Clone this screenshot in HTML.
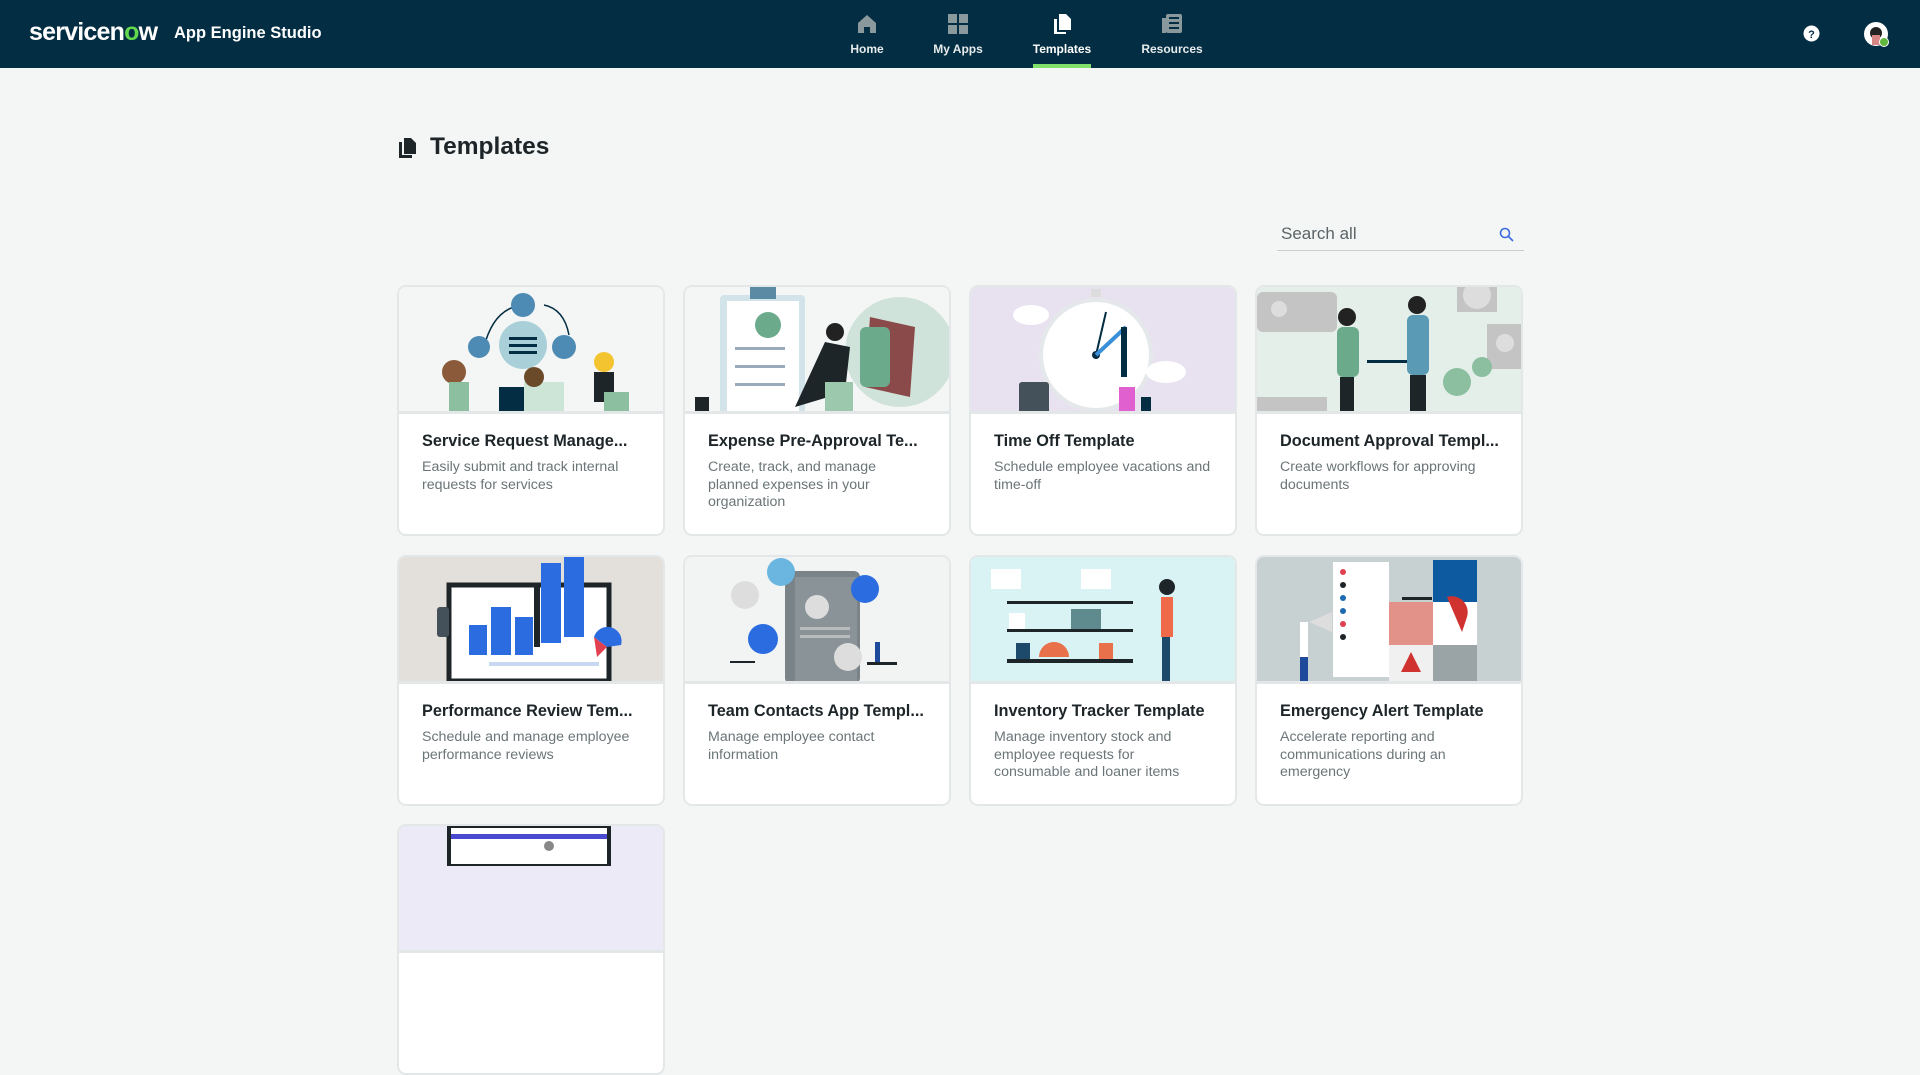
<!DOCTYPE html>
<html><head><meta charset="utf-8"><style>
*{box-sizing:border-box;margin:0;padding:0}
body{width:1920px;height:854px;overflow:hidden;background:#f4f6f6;font-family:"Liberation Sans",sans-serif;position:relative}
.hdr{position:absolute;left:0;top:0;width:1920px;height:68px;background:#032d42}
.logo{position:absolute;left:29px;top:18px;color:#fff;font-size:25px;font-weight:bold;letter-spacing:-0.8px}
.logo .o{color:#62d84e}
.app{position:absolute;left:174px;top:24px;color:#fff;font-size:16.5px;font-weight:bold}
.nav{position:absolute;top:0;height:68px;text-align:center;color:#e6ebec;font-size:12px;font-weight:bold}
.nav svg{display:block;margin:13px auto 7px}
.ul{position:absolute;left:1033px;top:64px;width:58px;height:4px;background:#7fe06a}
.title{position:absolute;left:430px;top:133px;font-size:24.5px;font-weight:bold;color:#1d2528}
.search{position:absolute;left:1277px;top:220px;width:247px;height:31px;border-bottom:1px solid #c7cdd0;font-size:17px;color:#5b6366;padding-left:4px;line-height:28px}
.card{position:absolute;width:268px;height:251px;background:#fff;border:2px solid #e4e7e8;border-radius:9px;overflow:hidden}
.img{height:127px;border-bottom:3px solid #e4e7e8;overflow:hidden}
.img svg{display:block}
.ct{position:absolute;left:23px;top:145px;font-size:16.3px;font-weight:bold;color:#1d2528;white-space:nowrap}
.cd{position:absolute;left:23px;top:172px;width:218px;font-size:14.2px;line-height:17.5px;color:#6b7578}
</style></head><body>
<div class="hdr">
<div class="logo">servicen<span class="o">o</span>w</div>
<div class="app">App Engine Studio</div>
<div class="nav" style="left:837px;width:60px"><svg width="22" height="22" viewBox="0 0 22 22"><path d="M2 10L11 2L20 10V20H14V14H8V20H2Z" fill="#8a9a9c"/></svg>Home</div>
<div class="nav" style="left:923px;width:70px"><svg width="22" height="22" viewBox="0 0 22 22"><rect x="1" y="1" width="9" height="9" fill="#8a9a9c"/><rect x="12" y="1" width="9" height="9" fill="#8a9a9c"/><rect x="1" y="12" width="9" height="9" fill="#8a9a9c"/><rect x="12" y="12" width="9" height="9" fill="#8a9a9c"/></svg>My Apps</div>
<div class="nav" style="left:1027px;width:70px;color:#fff"><svg width="22" height="22" viewBox="0 0 22 22"><path d="M3 6H6V19H15V21H3Z" fill="#fff"/><path d="M8 1H15L20 6V17H8Z" fill="#fff"/></svg>Templates</div>
<div class="nav" style="left:1132px;width:80px"><svg width="22" height="22" viewBox="0 0 22 22"><rect x="1" y="5" width="4" height="15" fill="#8a9a9c"/><rect x="5" y="1" width="16" height="19" rx="2" fill="#8a9a9c"/><rect x="8" y="4" width="10" height="2" fill="#032d42"/><rect x="8" y="9" width="10" height="2" fill="#032d42"/><rect x="8" y="14" width="10" height="2" fill="#032d42"/></svg>Resources</div>
<div class="ul"></div>
<svg style="position:absolute;left:1803px;top:25px" width="17" height="17"><circle cx="8.5" cy="8.5" r="8" fill="#fff"/><text x="8.5" y="13" font-size="11" font-weight="bold" text-anchor="middle" fill="#032d42" font-family="Liberation Sans">?</text></svg>
<svg style="position:absolute;left:1864px;top:22px" width="26" height="26"><circle cx="12" cy="12" r="12" fill="#fff"/><circle cx="12" cy="11" r="6" fill="#222"/><rect x="8" y="13" width="8" height="10" fill="#d88585"/><circle cx="20" cy="20" r="4.5" fill="#62b83e" stroke="#fff"/></svg>
</div>
<svg style="position:absolute;left:398px;top:137px" width="20" height="22" viewBox="0 0 20 22"><path d="M1 5H4V18H14V21H1Z" fill="#1d2528"/><path d="M6 1H13L18 6V17H6Z" fill="#1d2528"/></svg>
<div class="title">Templates</div>
<div class="search">Search all<svg style="position:absolute;right:10px;top:7px" width="15" height="15"><circle cx="6" cy="6" r="4.5" fill="none" stroke="#3c6be0" stroke-width="1.6"/><path d="M9.5 9.5L14 14" stroke="#3c6be0" stroke-width="1.6"/></svg></div>

<div class="card" style="left:397px;top:285px"><div class="img" style="background:#f4f6f6"><svg width="264" height="127"><path d="M85 60Q95 20 125 18M145 18Q165 22 170 48" stroke="#032d42" fill="none" stroke-width="1.5"/><circle cx="124" cy="18" r="12" fill="#4d8bb4"/><circle cx="124" cy="58" r="24" fill="#a9cfd9"/><rect x="110" y="50" width="28" height="3" fill="#032d42"/><rect x="110" y="57" width="28" height="3" fill="#032d42"/><rect x="110" y="64" width="28" height="3" fill="#032d42"/><circle cx="80" cy="60" r="11" fill="#4d8bb4"/><circle cx="165" cy="60" r="12" fill="#4d8bb4"/><circle cx="55" cy="85" r="12" fill="#8a5a3a"/><rect x="50" y="95" width="20" height="32" fill="#8cbfa0"/><rect x="100" y="100" width="40" height="27" fill="#032d42"/><rect x="125" y="95" width="40" height="32" fill="#cde5d6"/><circle cx="135" cy="90" r="10" fill="#6b4a2a"/><circle cx="205" cy="75" r="10" fill="#f4c430"/><rect x="195" y="85" width="20" height="30" fill="#1d2528"/><rect x="205" y="105" width="25" height="22" fill="#8cbfa0"/></svg></div><div class="ct">Service Request Manage...</div><div class="cd">Easily submit and track internal requests for services</div></div>

<div class="card" style="left:683px;top:285px"><div class="img" style="background:#f4f6f6"><svg width="264" height="127"><rect x="35" y="8" width="85" height="125" rx="4" fill="#d2e3ea"/><rect x="42" y="14" width="72" height="115" fill="#fff"/><rect x="65" y="0" width="26" height="12" fill="#5b8aa5"/><circle cx="83" cy="38" r="13" fill="#6bab8c"/><rect x="50" y="60" width="50" height="3" fill="#9ab"/><rect x="50" y="78" width="50" height="3" fill="#9ab"/><rect x="50" y="96" width="50" height="3" fill="#9ab"/><circle cx="215" cy="65" r="55" fill="#cfe3db"/><path d="M185 30L230 40L225 110L180 100Z" fill="#8b4a4a"/><rect x="175" y="40" width="30" height="60" rx="6" fill="#6bab8c"/><circle cx="150" cy="45" r="9" fill="#222"/><path d="M140 55L165 60L160 105L110 120Z" fill="#1d2528"/><rect x="140" y="95" width="28" height="32" fill="#9cc9ae"/><rect x="10" y="110" width="14" height="17" fill="#1d2528"/></svg></div><div class="ct">Expense Pre-Approval Te...</div><div class="cd">Create, track, and manage planned expenses in your organization</div></div>

<div class="card" style="left:969px;top:285px"><div class="img" style="background:#e8e2f0"><svg width="264" height="127"><circle cx="125" cy="68" r="55" fill="#fff" stroke="#e5e8ea" stroke-width="4"/><circle cx="125" cy="68" r="4" fill="#032d42"/><path d="M125 68L135 25" stroke="#032d42" stroke-width="2"/><path d="M125 68L155 40" stroke="#3b8ed8" stroke-width="4"/><rect x="120" y="2" width="10" height="8" fill="#ddd"/><rect x="48" y="95" width="30" height="32" rx="3" fill="#44505a"/><rect x="148" y="100" width="16" height="27" fill="#e060d0"/><rect x="170" y="110" width="10" height="17" fill="#032d42"/><ellipse cx="60" cy="28" rx="18" ry="10" fill="#fff"/><ellipse cx="195" cy="85" rx="20" ry="11" fill="#fff"/><rect x="150" y="40" width="6" height="50" fill="#032d42"/></svg></div><div class="ct">Time Off Template</div><div class="cd">Schedule employee vacations and time-off</div></div>

<div class="card" style="left:1255px;top:285px"><div class="img" style="background:#e4efe9"><svg width="264" height="127"><rect x="0" y="5" width="80" height="40" rx="6" fill="#c4c4c4"/><circle cx="22" cy="22" r="8" fill="#ddd"/><rect x="230" y="37" width="34" height="45" fill="#c4c4c4"/><circle cx="248" cy="56" r="9" fill="#ddd"/><rect x="200" y="0" width="40" height="25" fill="#c4c4c4"/><circle cx="220" cy="8" r="14" fill="#ddd"/><rect x="0" y="110" width="70" height="17" fill="#c4c4c4"/><circle cx="200" cy="95" r="14" fill="#8cbfa0"/><circle cx="225" cy="80" r="10" fill="#8cbfa0"/><circle cx="90" cy="30" r="9" fill="#222"/><rect x="80" y="40" width="22" height="50" rx="6" fill="#6bab8c"/><rect x="83" y="90" width="14" height="37" fill="#1d2528"/><circle cx="160" cy="18" r="9" fill="#222"/><rect x="150" y="28" width="22" height="60" rx="6" fill="#5a9ab4"/><rect x="153" y="88" width="16" height="39" fill="#1d2528"/><rect x="110" y="73" width="40" height="3" fill="#032d42"/></svg></div><div class="ct">Document Approval Templ...</div><div class="cd">Create workflows for approving documents</div></div>

<div class="card" style="left:397px;top:555px"><div class="img" style="background:#e3dfdb"><svg width="264" height="127"><rect x="50" y="28" width="160" height="96" fill="#fff" stroke="#1d2528" stroke-width="5"/><rect x="70" y="68" width="18" height="30" fill="#2b6de0"/><rect x="92" y="50" width="20" height="48" fill="#2b6de0"/><rect x="116" y="60" width="18" height="38" fill="#2b6de0"/><rect x="142" y="6" width="20" height="80" fill="#2b6de0"/><rect x="165" y="0" width="20" height="80" fill="#2b6de0"/><rect x="38" y="50" width="12" height="30" rx="3" fill="#44505a"/><rect x="90" y="105" width="110" height="4" fill="#c8d8f0"/><path d="M195 80A14 14 0 0 1 222 88L208 90Z" fill="#2b6de0"/><path d="M195 80L208 90L198 100Z" fill="#e04050"/><rect x="135" y="30" width="6" height="60" fill="#1d2528"/></svg></div><div class="ct">Performance Review Tem...</div><div class="cd">Schedule and manage employee performance reviews</div></div>

<div class="card" style="left:683px;top:555px"><div class="img" style="background:#f2f4f4"><svg width="264" height="127"><rect x="100" y="14" width="75" height="113" rx="6" fill="#7a8388"/><rect x="110" y="20" width="62" height="107" fill="#8a9398"/><circle cx="132" cy="50" r="12" fill="#ddd"/><rect x="115" y="70" width="50" height="3" fill="#bbb"/><rect x="115" y="78" width="50" height="3" fill="#bbb"/><circle cx="96" cy="15" r="14" fill="#6bb6e0"/><circle cx="60" cy="38" r="14" fill="#ddd"/><circle cx="180" cy="32" r="14" fill="#2b6de0"/><circle cx="78" cy="82" r="15" fill="#2b6de0"/><circle cx="163" cy="100" r="14" fill="#ddd"/><rect x="190" y="85" width="5" height="20" fill="#1d4a9a"/><rect x="182" y="105" width="30" height="3" fill="#1d2528"/><path d="M45 105H70" stroke="#1d2528" stroke-width="2"/></svg></div><div class="ct">Team Contacts App Templ...</div><div class="cd">Manage employee contact information</div></div>

<div class="card" style="left:969px;top:555px"><div class="img" style="background:#d9f3f5"><svg width="264" height="127"><rect x="20" y="12" width="30" height="20" fill="#fff"/><rect x="110" y="12" width="30" height="20" fill="#fff"/><rect x="36" y="44" width="126" height="3" fill="#1d2528"/><rect x="38" y="56" width="16" height="16" fill="#fff"/><rect x="100" y="52" width="30" height="20" fill="#5f8b8f"/><rect x="36" y="72" width="126" height="3" fill="#1d2528"/><path d="M68 100A15 15 0 0 1 98 100Z" fill="#e8704a"/><rect x="45" y="86" width="14" height="16" fill="#1d4a6a"/><rect x="128" y="86" width="14" height="16" fill="#e8704a"/><rect x="36" y="102" width="126" height="4" fill="#1d2528"/><rect x="190" y="40" width="12" height="40" fill="#f06a4a"/><circle cx="196" cy="30" r="8" fill="#1d2528"/><rect x="191" y="80" width="8" height="45" fill="#1d4a6a"/></svg></div><div class="ct">Inventory Tracker Template</div><div class="cd">Manage inventory stock and employee requests for consumable and loaner items</div></div>

<div class="card" style="left:1255px;top:555px"><div class="img" style="background:#c7d1d2"><svg width="264" height="127"><rect x="76" y="5" width="56" height="115" fill="#fff"/><circle cx="86" cy="15" r="3" fill="#e04050"/><circle cx="86" cy="28" r="3" fill="#1d2528"/><circle cx="86" cy="41" r="3" fill="#1d6ab0"/><circle cx="86" cy="54" r="3" fill="#1d6ab0"/><circle cx="86" cy="67" r="3" fill="#e04050"/><circle cx="86" cy="80" r="3" fill="#1d2528"/><rect x="132" y="45" width="44" height="43" fill="#e29288"/><rect x="176" y="3" width="44" height="42" fill="#0e5aa0"/><rect x="176" y="45" width="44" height="43" fill="#fff"/><rect x="132" y="88" width="44" height="39" fill="#f0f0f0"/><rect x="176" y="88" width="44" height="39" fill="#9aa4a6"/><path d="M154 95L144 115H164Z" fill="#d0322f"/><path d="M210 60A16 16 0 0 0 190 40L205 75Z" fill="#d0322f"/><rect x="43" y="65" width="8" height="35" fill="#fff"/><rect x="43" y="100" width="8" height="27" fill="#1d4a9a"/><path d="M52 65L75 55V75Z" fill="#ddd"/><rect x="145" y="40" width="30" height="3" fill="#1d2528"/></svg></div><div class="ct">Emergency Alert Template</div><div class="cd">Accelerate reporting and communications during an emergency</div></div>

<div class="card" style="left:397px;top:824px"><div class="img" style="background:#eceaf6"><svg width="264" height="40"><rect x="50" y="0" width="160" height="40" fill="#fff" stroke="#1d2528" stroke-width="4"/><rect x="52" y="8" width="156" height="5" fill="#4a4ad0"/><circle cx="150" cy="20" r="5" fill="#888"/></svg></div></div>
</body></html>
